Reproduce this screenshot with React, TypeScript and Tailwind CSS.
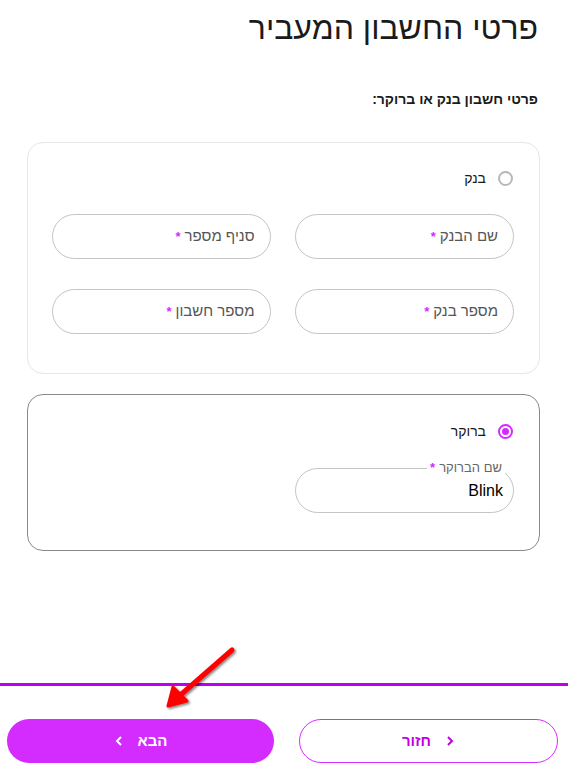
import { useState } from "react";

const Star = () => <span className="text-[#d42bff] text-[13px] font-bold align-top mr-[4px]">*</span>;

function Field({ label }: { label: string }) {
  return (
    <div className="h-[45px] w-[219px] rounded-full border border-[#c4c4c4] flex items-center px-[15px] text-[15px] text-[#555]">
      <span>{label}</span>
      <Star />
    </div>
  );
}

function Radio({ checked }: { checked: boolean }) {
  return checked ? (
    <span className="w-[15px] h-[15px] rounded-full border-2 border-[#d42bff] flex items-center justify-center">
      <span className="w-[7px] h-[7px] rounded-full bg-[#d42bff]" />
    </span>
  ) : (
    <span className="w-[15px] h-[15px] rounded-full border-2 border-[#b8b8b8]" />
  );
}

export default function App() {
  const [mode, setMode] = useState("broker");

  return (
    <div dir="rtl" className="relative h-[780px] w-[568px] bg-white flex flex-col font-['Liberation_Sans',sans-serif] text-[#1a1a1a]">
      <div className="pr-[30px] pl-[28px]">
        <h1 className="text-[32px] leading-[40px] pt-[8px]">פרטי החשבון המעביר</h1>
        <p className="mt-[41px] text-[14px] font-bold">פרטי חשבון בנק או ברוקר:</p>

        {/* bank */}
        <div className="mt-[32px] mr-[-2px] ml-[-1px] rounded-[16px] border border-[#e6e6e6] pt-[25px] pb-[39px] pr-[26px] pl-[24px]">
          <div className="flex items-center gap-[12px] cursor-pointer" onClick={() => setMode("bank")}>
            <Radio checked={mode === "bank"} />
            <span className="text-[14px]">בנק</span>
          </div>
          <div className="mt-[25px] grid grid-cols-2 gap-x-[25px] gap-y-[30px] mr-[-1px]">
            <Field label="שם הבנק" />
            <Field label="סניף מספר" />
            <Field label="מספר בנק" />
            <Field label="מספר חשבון" />
          </div>
        </div>

        {/* broker */}
        <div className="mt-[20px] mr-[-2px] ml-[-1px] rounded-[16px] border border-[#8a8a8a] pt-[26px] pb-[37px] pr-[26px] pl-[24px]">
          <div className="flex items-center gap-[12px] cursor-pointer" onClick={() => setMode("broker")}>
            <Radio checked={mode === "broker"} />
            <span className="text-[14px]">ברוקר</span>
          </div>
          <div className="relative mt-[26px] mr-[-1px] h-[45px] w-[219px] rounded-full border border-[#c4c4c4] flex items-center px-[10px] text-[16px] text-black">
            <span className="absolute -top-[9px] right-[8px] bg-white px-[3px] text-[13px] text-[#666] leading-[16px]">
              שם הברוקר<Star />
            </span>
            <span dir="ltr">Blink</span>
          </div>
        </div>
      </div>

      <div className="flex-1" />

      <div className="h-[3px] bg-[#bf00ef]" />
      <div className="mt-[33px] mb-[17px] flex gap-[25px] pr-[10px] pl-[7px]">
        <button className="h-[44px] w-[259px] rounded-full border border-[#d42bff] text-[#c000e6] text-[15px] font-bold flex items-center justify-center gap-[14px]">
          <svg width="10" height="12" viewBox="0 0 10 12" fill="none" stroke="currentColor" strokeWidth="2"><path d="M3 2l4 4-4 4" /></svg>
          <span>חזור</span>
        </button>
        <button className="h-[44px] w-[267px] rounded-full bg-[#d42bff] text-white text-[15px] font-bold flex items-center justify-center gap-[14px]">
          <span>הבא</span>
          <svg width="10" height="12" viewBox="0 0 10 12" fill="none" stroke="currentColor" strokeWidth="2"><path d="M7 2L3 6l4 4" /></svg>
        </button>
      </div>

      {/* annotation arrow */}
      <svg className="absolute left-[155px] top-[640px] pointer-events-none" width="90" height="80" viewBox="0 0 90 80">
        <defs>
          <filter id="sh" x="-20%" y="-20%" width="140%" height="140%">
            <feDropShadow dx="1.5" dy="1.5" stdDeviation="1.2" floodColor="#000" floodOpacity="0.5" />
          </filter>
        </defs>
        <g filter="url(#sh)" fill="#ff0000" stroke="#ff0000" strokeLinecap="round" strokeLinejoin="round">
          <line x1="77" y1="10" x2="22" y2="58" strokeWidth="5" />
          <path d="M13 66 L18 47 L32 61 Z" strokeWidth="3" />
        </g>
      </svg>
    </div>
  );
}
